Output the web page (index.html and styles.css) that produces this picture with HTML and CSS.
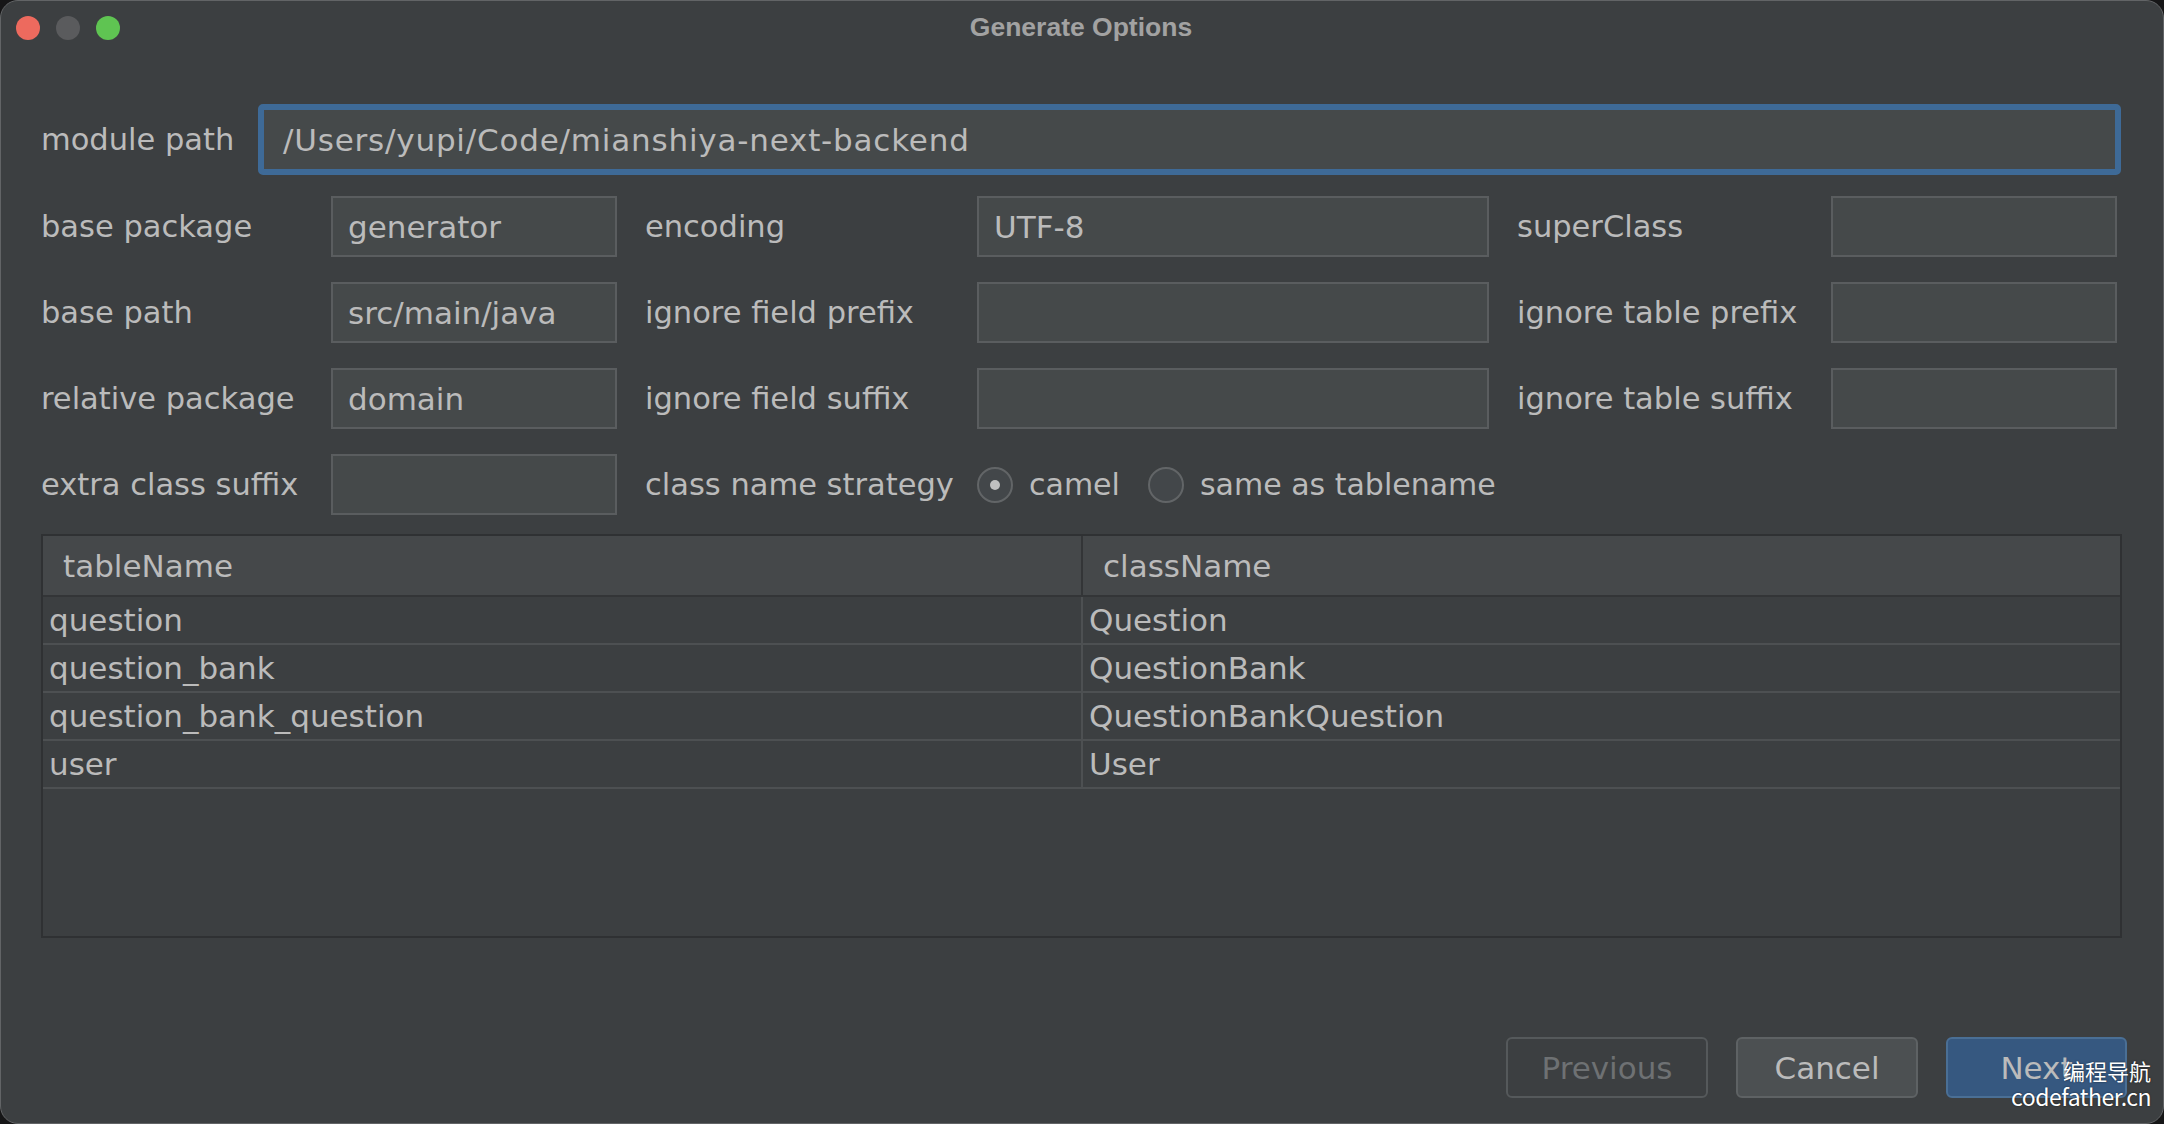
FILE: index.html
```html
<!DOCTYPE html>
<html>
<head>
<meta charset="utf-8">
<title>Generate Options</title>
<link rel="stylesheet" href="styles.css">
</head>
<body>
<div class="window">
  <div class="titlebar">
    <div class="lights">
      <span class="light red"></span>
      <span class="light gray"></span>
      <span class="light green"></span>
    </div>
    <div class="title">Generate Options</div>
  </div>
  <div class="content">
    <div class="module-row">
      <span class="label module-label">module path</span>
      <div class="field focused">/Users/yupi/Code/mianshiya-next-backend</div>
    </div>
    <div class="form-grid">
      <span class="label">base package</span>
      <div class="field">generator</div>
      <span class="label">encoding</span>
      <div class="field">UTF-8</div>
      <span class="label">superClass</span>
      <div class="field"></div>

      <span class="label">base path</span>
      <div class="field">src/main/java</div>
      <span class="label">ignore field prefix</span>
      <div class="field"></div>
      <span class="label">ignore table prefix</span>
      <div class="field"></div>

      <span class="label">relative package</span>
      <div class="field">domain</div>
      <span class="label">ignore field suffix</span>
      <div class="field"></div>
      <span class="label">ignore table suffix</span>
      <div class="field"></div>

      <span class="label">extra class suffix</span>
      <div class="field"></div>
      <span class="label">class name strategy</span>
      <div class="radios">
        <span class="radio checked"></span>
        <span class="radio-text">camel</span>
        <span class="radio"></span>
        <span class="radio-text">same as tablename</span>
      </div>
    </div>
    <div class="table">
      <div class="thead">
        <div class="th th-first">tableName</div>
        <div class="th">className</div>
      </div>
      <div class="tbody">
        <div class="tr"><div class="td td-first">question</div><div class="td">Question</div></div>
        <div class="tr"><div class="td td-first">question_bank</div><div class="td">QuestionBank</div></div>
        <div class="tr"><div class="td td-first">question_bank_question</div><div class="td">QuestionBankQuestion</div></div>
        <div class="tr"><div class="td td-first">user</div><div class="td">User</div></div>
      </div>
    </div>
    <div class="footer">
      <div class="btn btn-disabled">Previous</div>
      <div class="btn btn-cancel">Cancel</div>
      <div class="btn btn-next">Next</div>
    </div>
  </div>
  <div class="watermark">
    <div class="wm-cn">编程导航</div>
    <div class="wm-en">codefather.cn</div>
  </div>
</div>
</body>
</html>
```
FILE: styles.css
```css
* { box-sizing: border-box; }
html, body {
  margin: 0;
  padding: 0;
  background: #161617;
}
body {
  width: 2164px;
  height: 1124px;
  overflow: hidden;
  font-family: "DejaVu Sans", sans-serif;
}
.window {
  position: relative;
  width: 2164px;
  height: 1124px;
  background: #3c3f41;
  border: 1px solid #626466;
  border-radius: 18px;
  overflow: hidden;
  display: flex;
  flex-direction: column;
  color: #bbbbbb;
}
.titlebar {
  position: relative;
  height: 52px;
  display: flex;
  align-items: center;
  justify-content: center;
}
.lights {
  position: absolute;
  left: 15px;
  top: 15px;
  display: flex;
  gap: 16px;
}
.light {
  width: 24px;
  height: 24px;
  border-radius: 50%;
}
.red { background: #ed6a5e; }
.gray { background: #5a5b5d; }
.green { background: #5fc452; }
.title {
  font-family: "Liberation Sans", Arial, sans-serif;
  font-weight: bold;
  font-size: 26.5px;
  color: #a2a2a2;
  margin-left: -2px;
}
.content {
  flex: 1;
  display: flex;
  flex-direction: column;
  padding: 51px 42px 25px 40px;
}
.label {
  font-size: 30.5px;
  color: #bbbbbb;
  white-space: nowrap;
  align-self: center;
}
.module-row {
  display: flex;
  align-items: center;
  height: 71px;
}
.module-label {
  width: 217px;
}
.field {
  height: 61px;
  background: #45494a;
  border: 2px solid #5a5d5f;
  font-size: 31px;
  color: #bbbbbb;
  padding: 0 15px;
  display: flex;
  align-items: center;
  white-space: nowrap;
}
.field.focused {
  flex: 1;
  height: 71px;
  border: 6px solid #3e6a97;
  border-radius: 5px;
  padding: 0 19px;
  letter-spacing: 0.8px;
}
.form-grid {
  margin-top: 21px;
  display: grid;
  grid-template-columns: 262px 286px 304px 512px 286px 286px;
  grid-auto-rows: 61px;
  column-gap: 28px;
  row-gap: 25px;
}
.radios {
  grid-column: 4 / 7;
  display: flex;
  align-items: center;
  font-size: 30px;
}
.radio {
  width: 36px;
  height: 36px;
  border-radius: 50%;
  border: 2px solid #626567;
  background: #43474a;
  display: flex;
  align-items: center;
  justify-content: center;
}
.radio.checked::after {
  content: "";
  width: 10px;
  height: 10px;
  border-radius: 50%;
  background: #c0c0c0;
}
.radio-text {
  margin-left: 16px;
  margin-right: 28px;
}
.table {
  margin-top: 19px;
  width: 2081px;
  height: 404px;
  border: 2px solid #2f3133;
  background: #3c3f41;
  display: flex;
  flex-direction: column;
}
.thead {
  display: flex;
  height: 61px;
  background: #45484a;
  border-bottom: 2px solid #333537;
  flex-shrink: 0;
}
.th {
  font-size: 31px;
  display: flex;
  align-items: center;
  padding-left: 20px;
  flex: 1;
}
.th-first {
  flex: 0 0 1040px;
  padding-left: 20px;
  border-right: 2px solid #333537;
}
.tbody {
  display: flex;
  flex-direction: column;
}
.tr {
  display: flex;
  height: 48px;
  border-bottom: 2px solid #4d5052;
}
.td {
  font-size: 31px;
  display: flex;
  align-items: center;
  padding-left: 6px;
  flex: 1;
  white-space: nowrap;
}
.td-first {
  flex: 0 0 1040px;
  border-right: 2px solid #4d5052;
}
.footer {
  margin-top: auto;
  display: flex;
  justify-content: flex-end;
  gap: 28px;
  margin-right: -6px;
}
.btn {
  height: 61px;
  border-radius: 6px;
  font-size: 31px;
  display: flex;
  align-items: center;
  justify-content: center;
  border: 2px solid #5a5e60;
}
.btn-disabled {
  width: 202px;
  color: #6e7173;
  background: transparent;
  border-color: #55595b;
}
.btn-cancel {
  width: 182px;
  background: #4c5052;
  border-color: #5e6264;
  color: #bbbbbb;
}
.btn-next {
  width: 181px;
  background: #365880;
  border-color: #4a6f95;
  color: #bbbbbb;
}
.watermark {
  position: absolute;
  right: 12px;
  bottom: 12px;
  text-align: right;
  color: #ffffff;
  font-family: "Noto Sans CJK SC", "Noto Sans", sans-serif;
  text-shadow: 0 0 2px rgba(0,0,0,0.6);
  line-height: 1.2;
}
.wm-cn {
  font-size: 22px;
}
.wm-en {
  font-size: 23px;
  letter-spacing: -0.5px;
}
```
